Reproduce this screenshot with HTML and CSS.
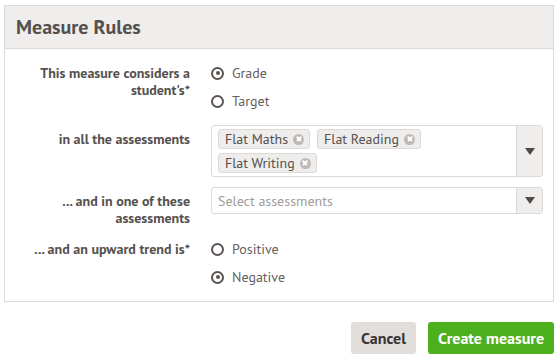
FILE: index.html
```html
<!DOCTYPE html>
<html>
<head>
<meta charset="utf-8">
<link rel="stylesheet" href="styles.css">
</head>
<body>
<div class="page">
  <section class="panel">
    <header class="panel-head">
      <h2 class="panel-title">Measure Rules</h2>
    </header>
    <div class="panel-body">
      <div class="row">
        <div class="label">This measure considers a student's*</div>
        <div class="control radios">
          <div class="radio checked"><span class="dot"></span><span>Grade</span></div>
          <div class="radio"><span class="dot"></span><span>Target</span></div>
        </div>
      </div>
      <div class="row">
        <div class="label">in all the assessments</div>
        <div class="control">
          <div class="select multi">
            <div class="select-main tags">
              <span class="tag">Flat Maths<span class="x"></span></span>
              <span class="tag">Flat Reading<span class="x"></span></span>
              <span class="tag">Flat Writing<span class="x"></span></span>
            </div>
            <div class="select-arrow"><span class="tri"></span></div>
          </div>
        </div>
      </div>
      <div class="row row-tight">
        <div class="label">... and in one of these assessments</div>
        <div class="control">
          <div class="select">
            <div class="select-main placeholder">Select assessments</div>
            <div class="select-arrow"><span class="tri"></span></div>
          </div>
        </div>
      </div>
      <div class="row">
        <div class="label">... and an upward trend is*</div>
        <div class="control radios">
          <div class="radio"><span class="dot"></span><span>Positive</span></div>
          <div class="radio checked"><span class="dot"></span><span>Negative</span></div>
        </div>
      </div>
    </div>
  </section>
  <div class="actions">
    <button class="btn btn-cancel">Cancel</button>
    <button class="btn btn-create">Create measure</button>
  </div>
</div>
</body>
</html>
```
FILE: styles.css
```css
* { box-sizing: border-box; }
html, body { margin: 0; padding: 0; background: #fff; }
body {
  font-family: "PT Sans", Lato, "Noto Sans", sans-serif;
  color: #555050;
}
.page {
  padding: 5px 6px 0 4px;
}
.panel {
  border: 1px solid #dcdad9;
}
.panel-head {
  background: #efeeed;
  border-bottom: 1px solid #dcdad9;
  height: 43px;
  display: flex;
  align-items: center;
  padding-left: 11px;
}
.panel-title {
  margin: 0;
  font-size: 20px;
  font-weight: 700;
  color: #55504e;
}
.panel-body {
  padding: 10px 10px 10px 0;
  display: flex;
  flex-direction: column;
  gap: 10px;
}
.row {
  display: grid;
  grid-template-columns: 185px 332px;
  column-gap: 21px;
}
.row-tight { margin-bottom: -2px; }
.label {
  text-align: right;
  font-size: 14px;
  font-weight: 700;
  line-height: 17px;
  padding-top: 6px;
  color: #55504e;
}
.radios { display: flex; flex-direction: column; }
.radio {
  height: 28px;
  display: flex;
  align-items: center;
  gap: 8px;
  font-size: 14px;
  color: #66605d;
}
.dot {
  width: 13px;
  height: 13px;
  border: 2px solid #5a5350;
  border-radius: 50%;
  position: relative;
  flex: none;
}
.radio.checked .dot::after {
  content: "";
  position: absolute;
  left: 2.5px;
  top: 2.5px;
  width: 4px;
  height: 4px;
  border-radius: 50%;
  background: #5a5350;
}
.select {
  display: flex;
  border: 1px solid #dcdad9;
  border-radius: 3px;
  min-height: 27px;
}
.select-main {
  flex: 1;
  font-size: 14px;
}
.placeholder {
  color: #a09c9a;
  padding: 0 6px;
  display: flex;
  align-items: center;
}
.tags {
  display: flex;
  flex-wrap: wrap;
  gap: 4px 7px;
  padding: 3px 6px;
  align-content: flex-start;
}
.tag {
  height: 20px;
  display: inline-flex;
  align-items: center;
  gap: 5px;
  padding: 0 5px 0 6px;
  background: #eeedec;
  border: 1px solid #dcdad9;
  border-radius: 3px;
  color: #55504e;
}
.x {
  width: 11px;
  height: 11px;
  border-radius: 50%;
  background: #bdb9b7;
  position: relative;
  flex: none;
}
.x::before, .x::after {
  content: "";
  position: absolute;
  left: 2.5px;
  top: 4.75px;
  width: 6px;
  height: 1.5px;
  background: #fff;
  transform: rotate(45deg);
}
.x::after { transform: rotate(-45deg); }
.select-arrow {
  width: 26px;
  flex: none;
  background: #efeeed;
  border-left: 1px solid #dcdad9;
  display: flex;
  align-items: center;
  justify-content: center;
}
.tri {
  width: 0;
  height: 0;
  border-left: 5px solid transparent;
  border-right: 5px solid transparent;
  border-top: 7px solid #4f4947;
}
.actions {
  display: flex;
  justify-content: flex-end;
  gap: 12px;
  margin-top: 20px;
}
.btn {
  font-family: inherit;
  height: 32px;
  border: 0;
  border-radius: 3px;
  font-size: 16px;
  font-weight: 700;
  padding: 0;
}
.btn-cancel {
  background: #e1dedc;
  color: #3a3533;
  width: 65px;
}
.btn-create {
  background: #4caf1c;
  color: #fff;
  width: 126px;
}
```
